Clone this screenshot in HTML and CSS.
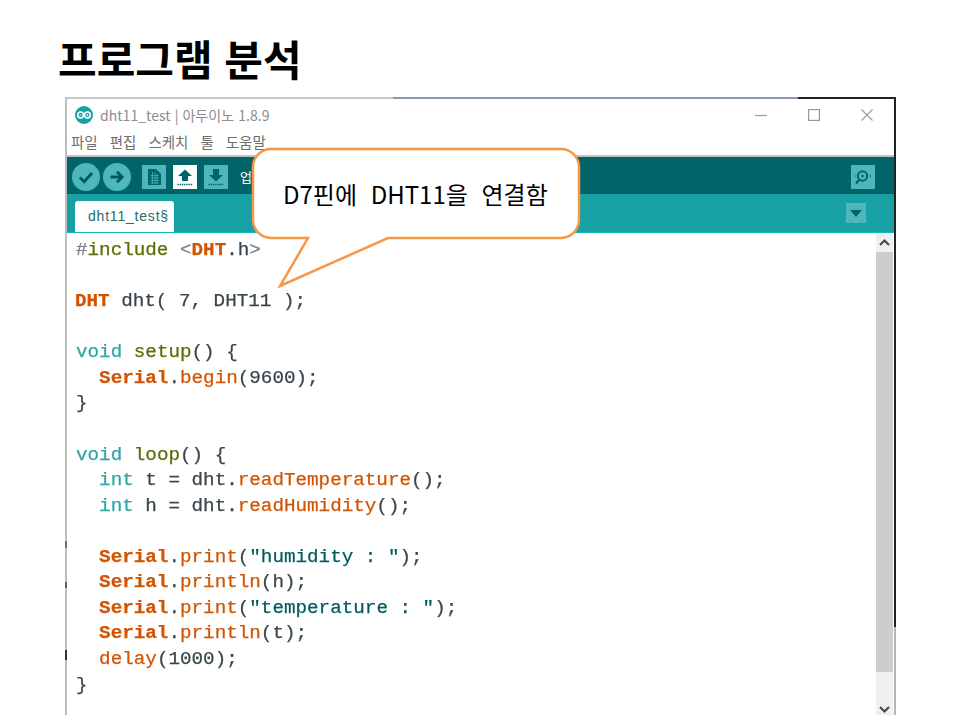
FILE: index.html
```html
<!DOCTYPE html>
<html lang="ko">
<head>
<meta charset="utf-8">
<title>프로그램 분석</title>
<link rel="stylesheet" href="styles.css">
</head>
<body>
<main class="slide">
  <h1 class="heading">프로그램 분석</h1>
  <section class="window">
    <div class="edge-top"></div>
    <div class="window-body">
      <header class="titlebar">
        <svg class="logo" width="18" height="18" viewBox="0 0 18 18"><circle cx="9" cy="9" r="9" fill="#17a1a5"/><circle cx="5.6" cy="9" r="2.9" fill="none" stroke="#fff" stroke-width="1.5"/><circle cx="12.4" cy="9" r="2.9" fill="none" stroke="#fff" stroke-width="1.5"/><path d="M4.5 9h2M11.4 9h2M12.4 8v2" stroke="#fff" stroke-width=".8"/></svg>
        <span class="title-text">dht11_test | 아두이노 1.8.9</span>
        <div class="controls">
          <svg width="12" height="12" viewBox="0 0 12 12"><path d="M0 6.5h12" stroke="#999" stroke-width="1.2"/></svg>
          <svg width="12" height="12" viewBox="0 0 12 12"><rect x=".6" y=".6" width="10.8" height="10.8" fill="none" stroke="#999" stroke-width="1.2"/></svg>
          <svg width="12" height="12" viewBox="0 0 12 12"><path d="M.5.5l11 11M11.5.5l-11 11" stroke="#999" stroke-width="1.1"/></svg>
        </div>
      </header>
      <nav class="menubar"><span>파일</span><span>편집</span><span>스케치</span><span>툴</span><span>도움말</span></nav>
      <div class="toolbar">
        <button class="round"><svg width="28" height="28" viewBox="0 0 28 28"><path d="M8 14.5l4.2 4.2L20 10" fill="none" stroke="#00585c" stroke-width="2.8"/></svg></button>
        <button class="round"><svg width="28" height="28" viewBox="0 0 28 28"><path d="M7.5 14h11M14 8.8l5.2 5.2-5.2 5.2" fill="none" stroke="#00585c" stroke-width="2.8"/></svg></button>
        <button class="square first"><svg width="24" height="24" viewBox="0 0 24 24"><path d="M6 4h8l5 5v11H6z" fill="#00646a"/><path d="M8.5 10.5h8M8.5 13h8M8.5 15.5h8M8.5 18h8M10.5 7v12M13 7v12M15.2 9v10" stroke="#4db8bb" stroke-width=".7"/></svg></button>
        <button class="square active"><svg width="24" height="24" viewBox="0 0 24 24"><path d="M12 4.5l7 6.5h-4v5H9v-5H5z" fill="#00646a"/><path d="M4.5 19.5h15" stroke="#00646a" stroke-width="1.4" stroke-dasharray="1.4 .8"/></svg></button>
        <button class="square"><svg width="24" height="24" viewBox="0 0 24 24"><path d="M12 16.500l7-6.500h-4V4H9v6H5z" fill="#00646a"/><path d="M4.500 19.500h15" stroke="#00646a" stroke-width="1.400" stroke-dasharray="1.400 .8"/></svg></button>
        <span class="status">업로드</span>
        <button class="square monitor"><svg width="24" height="24" viewBox="0 0 24 24"><circle cx="11.500" cy="11" r="4.700" fill="none" stroke="#00646a" stroke-width="2"/><circle cx="11.500" cy="11" r="1.300" fill="#00646a"/><path d="M8 15l-3 3.500" stroke="#00646a" stroke-width="2.400"/><path d="M3.500 11h1.500M18 11h2.500" stroke="#00646a" stroke-width=".8"/></svg></button>
      </div>
      <div class="tabs">
        <div class="tab">dht11_test§</div>
        <button class="tab-menu"><svg width="12" height="7" viewBox="0 0 12 7"><path d="M0 0h12L6 7z" fill="#00646a"/></svg></button>
      </div>
      <div class="editor">
        <div class="code">
          <div class="line"><span class="hash">#</span><span class="kw2">include</span> <span class="pun">&lt;</span><span class="cls">DHT</span>.h<span class="pun">&gt;</span></div>
          <div class="line"></div>
          <div class="line"><span class="cls shift">DHT</span> dht( 7, DHT11 );</div>
          <div class="line"></div>
          <div class="line"><span class="kw">void</span> <span class="kw2">setup</span>() {</div>
          <div class="line">  <span class="cls">Serial</span>.<span class="fn">begin</span>(9600);</div>
          <div class="line">}</div>
          <div class="line"></div>
          <div class="line"><span class="kw">void</span> <span class="kw2">loop</span>() {</div>
          <div class="line">  <span class="kw">int</span> t = dht.<span class="fn">readTemperature</span>();</div>
          <div class="line">  <span class="kw">int</span> h = dht.<span class="fn">readHumidity</span>();</div>
          <div class="line"></div>
          <div class="line">  <span class="cls">Serial</span>.<span class="fn">print</span>(<span class="str">"humidity : "</span>);</div>
          <div class="line">  <span class="cls">Serial</span>.<span class="fn">println</span>(h);</div>
          <div class="line">  <span class="cls">Serial</span>.<span class="fn">print</span>(<span class="str">"temperature : "</span>);</div>
          <div class="line">  <span class="cls">Serial</span>.<span class="fn">println</span>(t);</div>
          <div class="line">  <span class="fn">delay</span>(1000);</div>
          <div class="line">}</div>
        </div>
        <div class="scrollbar">
          <div class="arrow arrow-up"><svg width="11" height="7" viewBox="0 0 11 7"><path d="M1 6l4.500-4.500L10 6" fill="none" stroke="#444" stroke-width="2"/></svg></div>
          <div class="thumb"></div>
          <div class="arrow arrow-down"><svg width="11" height="7" viewBox="0 0 11 7"><path d="M1 1l4.500 4.500L10 1" fill="none" stroke="#444" stroke-width="2"/></svg></div>
        </div>
      </div>
    </div>
  </section>
  <aside class="callout">
    <svg class="callout-shape" width="332" height="144" viewBox="0 0 332 144"><path d="M22 2H312A18 18 0 0 1 330 20V73A18 18 0 0 1 312 91H139L31 139 59 91H22A18 18 0 0 1 4 73V20A18 18 0 0 1 22 2Z" fill="#fff" stroke="#f79646" stroke-width="2.500"/></svg>
    <p class="callout-text">D7핀에 DHT11을 연결함</p>
  </aside>
</main>
</body>
</html>
```

FILE: styles.css
```css
* { box-sizing: border-box; }
html, body { margin: 0; background: #fff; }
.slide {
  position: relative;
  width: 960px;
  height: 720px;
  padding: 33px 0 0 65px;
  overflow: hidden;
  font-family: "Noto Sans CJK KR", "Liberation Sans", sans-serif;
}
.heading {
  margin: 0 0 0 -7px;
  height: 64px;
  font-size: 42px;
  line-height: 50px;
  font-weight: 700;
  color: #000;
}
.window {
  width: 831px;
  height: 618px;
  display: flex;
  flex-direction: column;
}
.edge-top {
  height: 2px;
  flex: none;
  background: linear-gradient(to right, #c8c8c8 0, #c8c8c8 328px, #8a9aac 328px, #8a9aac 733px, #222 733px);
}
.window-body {
  flex: 1;
  min-height: 0;
  display: flex;
  flex-direction: column;
  padding: 0 2px;
  background:
    linear-gradient(to bottom, #222 0, #222 528px, #b5b5b5 528px) right top / 2px 100% no-repeat,
    linear-gradient(to bottom, #bdbdbd 0, #bdbdbd 442px, #5f7488 442px, #5f7488 449px, #bdbdbd 449px, #bdbdbd 483px, #6b5a44 483px, #6b5a44 489px, #bdbdbd 489px, #bdbdbd 551px, #333 551px, #333 561px, #bdbdbd 561px) left top / 2px 100% no-repeat;
}
.titlebar {
  height: 30px;
  flex: none;
  display: flex;
  align-items: center;
  padding: 1px 0 0 8px;
}
.logo { flex: none; }
.title-text {
  margin-left: 7px;
  font-size: 14px;
  letter-spacing: .05px;
  color: #8c8c8c;
}
.controls {
  margin-left: auto;
  display: flex;
  gap: 41px;
  padding-right: 21px;
}
.menubar {
  height: 28px;
  flex: none;
  display: flex;
  gap: 12px;
  padding: 0 0 2px 4px;
  align-items: center;
  font-size: 14.500px;
  color: #6e6e6e;
  border-bottom: 2px solid #c4c4c4;
}
.toolbar {
  height: 37px;
  flex: none;
  display: flex;
  align-items: center;
  padding: 3px 0 0 5px;
  background: #006468;
  border-bottom: 1px solid #005a5e;
}
button {
  border: 0;
  padding: 0;
  display: flex;
  align-items: center;
  justify-content: center;
}
.round {
  width: 28px;
  height: 28px;
  border-radius: 50%;
  margin-right: 3px;
  background: #4db8bb;
}
.square {
  width: 24px;
  height: 24px;
  margin-right: 7px;
  background: #4db8bb;
}
.square.first { margin-left: 8px; }
.square.active { background: #fff; }
.status {
  margin-left: 5px;
  font-size: 13px;
  color: #fff;
}
.monitor { margin: 0 19px 0 auto; }
.tabs {
  height: 39px;
  flex: none;
  display: flex;
  align-items: flex-end;
  padding-left: 8px;
  background: #17a1a5;
  border-bottom: 1px solid #14b5b9;
}
.tab {
  width: 99px;
  height: 31px;
  padding: 7px 0 0 13px;
  background: #fff;
  border-radius: 3px 3px 0 0;
  font-family: "Liberation Sans", sans-serif;
  font-size: 14px;
  letter-spacing: .8px;
  line-height: 17px;
  color: #2a6a6c;
}
.tab-menu {
  width: 20px;
  height: 20px;
  margin: 0 28px 9px auto;
  align-self: flex-end;
  background: #4db8bb;
}
.editor {
  flex: 1;
  min-height: 0;
  display: flex;
  background: #fff;
}
.code {
  flex: 1;
  padding: 5px 0 0 9px;
  font-family: "Liberation Mono", monospace;
  font-size: 19.250px;
  color: #3a464c;
  -webkit-text-stroke: .25px currentColor;
  filter: blur(.35px);
}
.line {
  height: 25.570px;
  line-height: 25.570px;
  white-space: pre;
}
.hash, .pun { color: #76808a; }
.kw { color: #2ea5aa; }
.kw2 { color: #5e6d03; }
.cls { color: #d35400; font-weight: 700; }
.shift { margin-left: -1px; }
.fn { color: #d35400; }
.str { color: #005c5f; }
.scrollbar {
  width: 17px;
  flex: none;
  margin-right: 1px;
  display: flex;
  flex-direction: column;
  background: #f0f0f0;
}
.arrow {
  flex: none;
  display: flex;
  justify-content: center;
}
.arrow-up { height: 19px; align-items: center; }
.arrow-down { height: 43px; align-items: flex-end; padding-bottom: 2px; }
.thumb { flex: 1; background: #cdcdcd; }
.callout {
  position: absolute;
  left: 249px;
  top: 147px;
  width: 332px;
  height: 144px;
}
.callout-shape { display: block; }
.callout-text {
  position: absolute;
  left: 34px;
  top: 29px;
  margin: 0;
  font-size: 24px;
  line-height: 36px;
  word-spacing: 7px;
  white-space: pre;
  color: #000;
}
```
